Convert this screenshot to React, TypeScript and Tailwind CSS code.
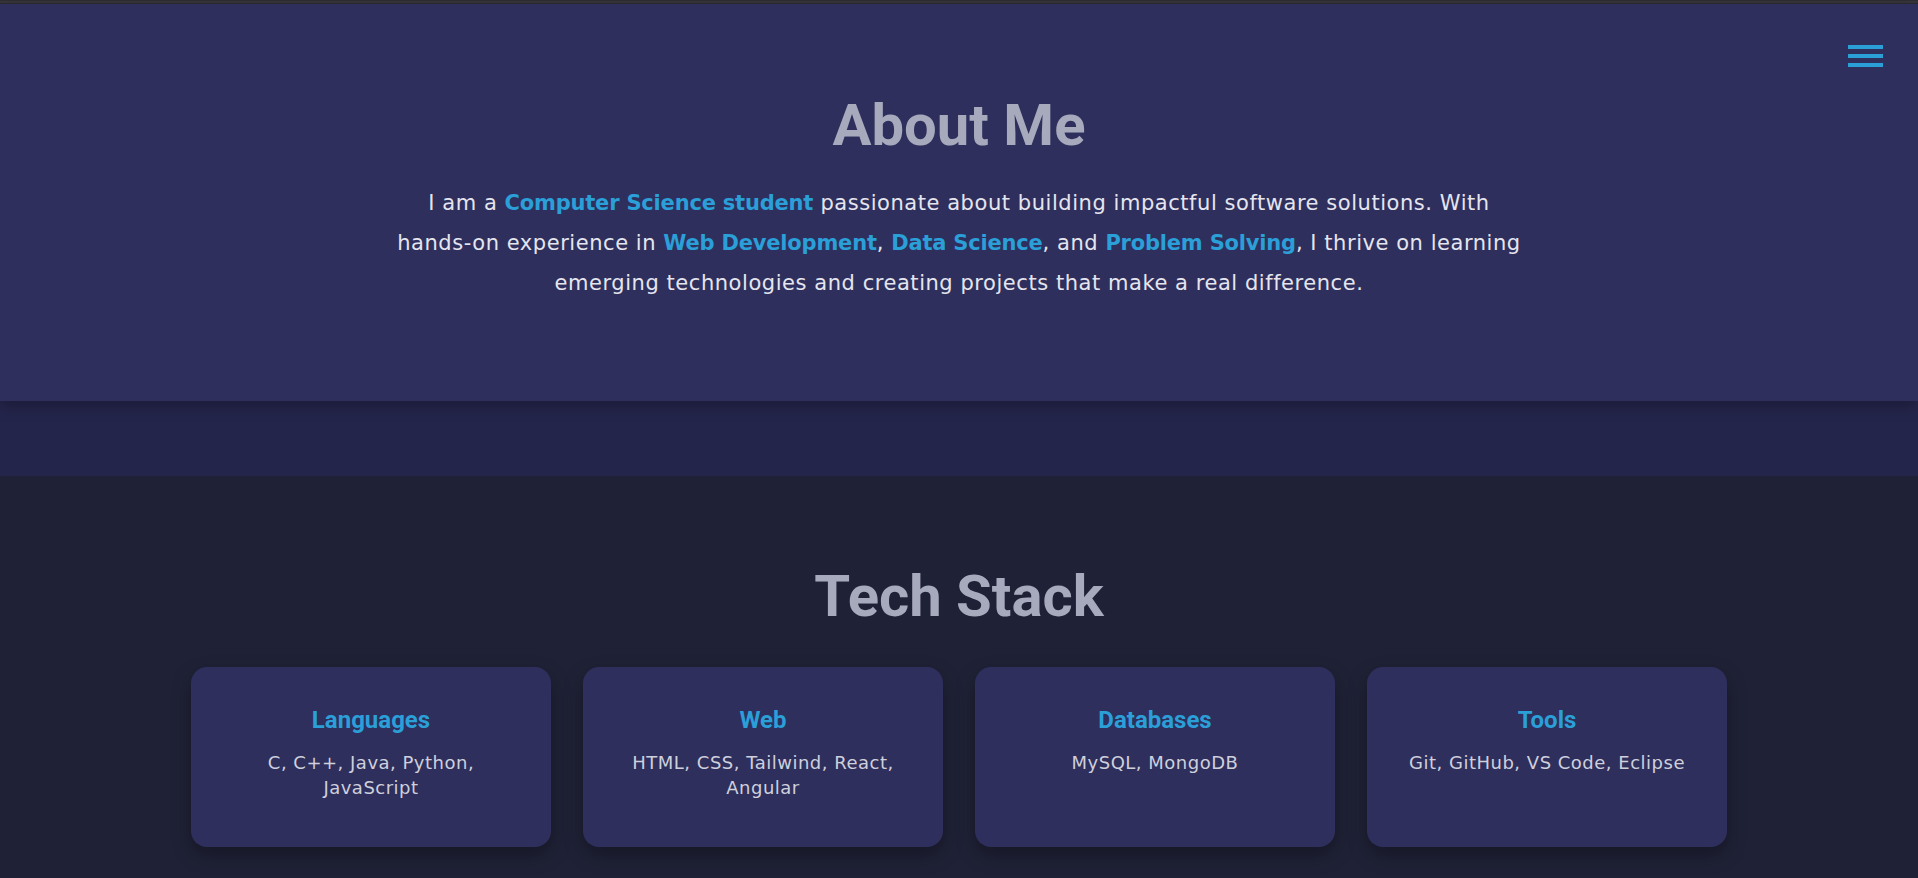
import React from "react";

const stack = [
  { titre: "Languages", items: "C, C++, Java, Python, JavaScript" },
  { titre: "Web", items: "HTML, CSS, Tailwind, React, Angular" },
  { titre: "Databases", items: "MySQL, MongoDB" },
  { titre: "Tools", items: "Git, GitHub, VS Code, Eclipse" },
];

// mots mis en avant dans le paragraphe
function Fort({ children }: { children: React.ReactNode }) {
  return <span className="font-semibold tracking-[-0.2px] text-[#2b9fd8]">{children}</span>;
}

export default function App() {
  return (
    <div className="min-h-screen bg-[#1f2136] font-['DejaVu_Sans',sans-serif]">
      {/* barre du haut */}
      <div className="h-[4px] bg-gradient-to-b from-[#2a2a2e] via-[#3a3a3f] to-[#26262b]" />

      {/* bouton menu */}
      <button className="absolute top-[45px] right-[35px] flex flex-col gap-[5px]">
        <span className="block w-[35px] h-[4px] bg-[#2b9fd8]" />
        <span className="block w-[35px] h-[4px] bg-[#2b9fd8]" />
        <span className="block w-[35px] h-[4px] bg-[#2b9fd8]" />
      </button>

      {/* ABOUT */}
      <div className="bg-[#24254b] pb-[75px]">
        <section className="h-[397px] bg-[#2e2f5c] pt-[87px] shadow-[0_6px_14px_rgba(0,0,0,0.25)] text-center">
          <h1 className="font-['Roboto',sans-serif] font-bold text-[58px] leading-[68px] text-[#a7a9bc]">
            About Me
          </h1>
          <p className="mx-auto mt-[24px] max-w-[1140px] text-[21px] leading-[40px] tracking-[0.55px] text-[#e5e5ef]">
            I am a <Fort>Computer Science student</Fort> passionate about building impactful software solutions.
            With hands-on experience in <Fort>Web Development</Fort>, <Fort>Data Science</Fort>, and{" "}
            <Fort>Problem Solving</Fort>, I thrive on learning emerging technologies and creating projects that
            make a real difference.
          </p>
        </section>
      </div>

      {/* TECH STACK */}
      <section className="pt-[86px] text-center">
        <h2 className="font-['Roboto',sans-serif] font-bold text-[58px] leading-[68px] text-[#a7a9bc]">
          Tech Stack
        </h2>
        <div className="mx-auto mt-[37px] grid max-w-[1536px] grid-cols-4 gap-8">
          {stack.map((s) => (
            <div
              key={s.titre}
              className="h-[180px] rounded-2xl bg-[#2e2f5c] px-8 pt-[39px] shadow-[0_8px_20px_rgba(0,0,0,0.3)]"
            >
              <h3 className="font-['Roboto',sans-serif] font-bold text-[24px] leading-[29px] text-[#2b9fd8]">
                {s.titre}
              </h3>
              <p className="mt-[15px] text-[18px] leading-[25px] tracking-[0.5px] text-[#cfd0dc]">{s.items}</p>
            </div>
          ))}
        </div>
      </section>
    </div>
  );
}
